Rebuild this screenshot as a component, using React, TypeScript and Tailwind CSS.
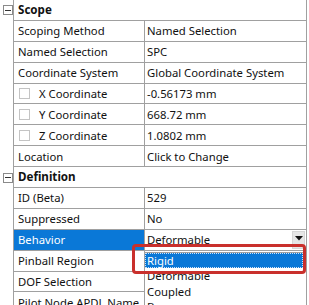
import React from "react";

const font = { fontFamily: '"Noto Sans", "Open Sans", sans-serif' };

function Expander() {
  return (
    <div className="w-[10px] h-[10px] border border-[#8a8a8a] bg-white flex items-center justify-center">
      <div className="w-[6px] h-px bg-[#333]" />
    </div>
  );
}

function Header({ label }: { label: string }) {
  return (
    <div className="flex h-[20.9px]">
      <div className="w-[13px] shrink-0 flex items-center pl-[3px]">
        <Expander />
      </div>
      <div className="w-[294px] border-l border-r border-b border-[#a0a0a0] flex items-center pl-[4px] font-bold text-[#111] text-[11.6px]">
        {label}
      </div>
    </div>
  );
}

function Row({
  label,
  value,
  check,
  selected,
  dropdown,
}: {
  label: string;
  value: string;
  check?: boolean;
  selected?: boolean;
  dropdown?: boolean;
}) {
  return (
    <div className="flex h-[20.9px]">
      <div className="w-[13px] shrink-0" />
      <div className="w-[294px] border-l border-r border-b border-[#a0a0a0] flex">
        <div
          className={
            "w-[131px] shrink-0 border-r border-[#a0a0a0] flex items-center pl-[4px] whitespace-nowrap overflow-hidden " +
            (selected ? "bg-[#0a78d7] text-white" : "text-[#111]")
          }
        >
          {check && (
            <div className="w-[11px] h-[11px] border border-[#c4c4c4] bg-white mr-[9px] ml-px shrink-0" />
          )}
          {label}
        </div>
        <div className="flex-1 flex items-center pl-[2px] text-[#111] relative whitespace-nowrap overflow-hidden">
          {value}
          {dropdown && (
            <div className="absolute right-px top-px bottom-[1px] w-[13px] bg-[#e6e6e6] border border-[#d6d6d6] flex justify-center pt-[4px]">
              <svg width="8" height="5" viewBox="0 0 8 5">
                <path d="M0 0 H8 L4 4.5 Z" fill="#111" />
              </svg>
            </div>
          )}
        </div>
      </div>
    </div>
  );
}

export default function App() {
  return (
    <div
      className="relative w-[309px] h-[305px] overflow-hidden bg-white text-[11.3px] leading-none"
      style={font}
    >
      <Header label="Scope" />
      <Row label="Scoping Method" value="Named Selection" />
      <Row label="Named Selection" value="SPC" />
      <Row label="Coordinate System" value="Global Coordinate System" />
      <Row label="X Coordinate" value="-0.56173 mm" check />
      <Row label="Y Coordinate" value="668.72 mm" check />
      <Row label="Z Coordinate" value="1.0802 mm" check />
      <Row label="Location" value="Click to Change" />
      <Header label="Definition" />
      <Row label="ID (Beta)" value="529" />
      <Row label="Suppressed" value="No" />
      <Row label="Behavior" value="Deformable" selected dropdown />
      <Row label="Pinball Region" value="" />
      <Row label="DOF Selection" value="" />
      <Row label="Pilot Node APDL Name" value="" />

      {/* dropdown list */}
      <div className="absolute left-[144px] top-[252px] w-[163px] h-[80px] bg-white border border-[#a0a0a0] text-[#111]">
        <div className="h-[15px] mr-[3px] bg-[#0a78d7] text-white flex items-center pl-[2px] outline outline-1 outline-dotted outline-[#cfe3f7] -outline-offset-1">
          Rigid
        </div>
        <div className="h-[15.5px] flex items-center pl-[2px]">Deformable</div>
        <div className="h-[15.5px] flex items-center pl-[2px]">Coupled</div>
        <div className="h-[15.5px] flex items-center pl-[2px]">Beam</div>
      </div>

      {/* red highlight */}
      <div className="absolute left-[132px] top-[244px] w-[174px] h-[30px] border-[3px] border-[#c9302c] rounded-[4px]" />
    </div>
  );
}
